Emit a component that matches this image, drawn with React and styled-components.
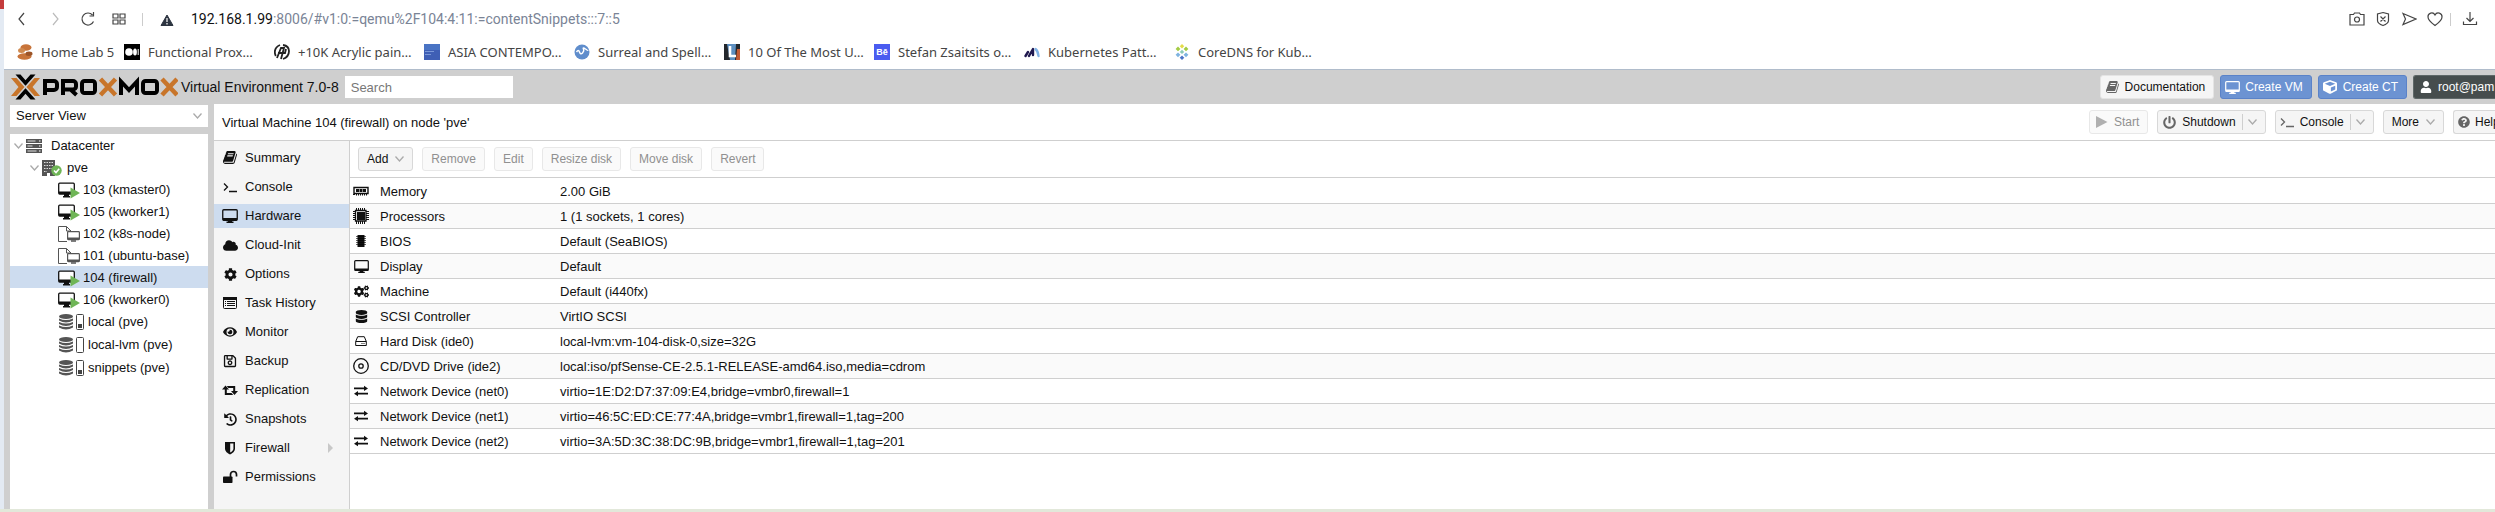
import React from 'react';
import styled, { createGlobalStyle, css } from 'styled-components';
import { FaCloud, FaCog, FaCogs, FaEye, FaHistory, FaDatabase, FaUser, FaCube, FaPowerOff, FaQuestionCircle, FaRegSave } from 'react-icons/fa';

const Global = createGlobalStyle`
  *, *::before, *::after { box-sizing: border-box; }
  html, body, #root { height: 100%; }
  body { margin: 0; background: #fff; font: 13px/20px "Liberation Sans", Arial, sans-serif; color: #111; overflow: hidden; }
  button, input, select { font: inherit; color: inherit; }
  ul { list-style: none; margin: 0; padding: 0; }
  a { color: inherit; text-decoration: none; }
  svg { display: block; flex: none; }
`;

const Window = styled.div`
  display: grid;
  grid-template-columns: 4px minmax(0, 1fr);
  grid-template-rows: minmax(0, 1fr) 3px;
  height: 100vh;
`;
const Edge = styled.div`
  background: linear-gradient(#c43c3c 9px, #e3eaf3 9px);
`;
const Browser = styled.div`
  display: flex;
  flex-direction: column;
  min-width: 0;
  min-height: 0;
`;
const BottomEdge = styled.div`
  grid-column: 1 / -1;
  background: #e2e8da;
`;

/* browser chrome */
const AddressRow = styled.div`
  display: flex;
  align-items: center;
  height: 38px;
  padding: 0 8px 0 10px;
  color: #444;
`;
const IconButton = styled.button`
  display: flex;
  align-items: center;
  justify-content: center;
  flex: none;
  width: ${p => p.$w || 26}px;
  height: 24px;
  padding: 0;
  border: 0;
  background: none;
  color: ${p => p.$faint ? '#bbb' : '#444'};
`;
const Divider = styled.span`
  width: 1px;
  height: 13px;
  margin: 0 ${p => p.$gap}px;
  background: #ccc;
`;
const Address = styled.div`
  flex: 1;
  font: 14px/20px Roboto, sans-serif;
  color: #7a8496;
  white-space: nowrap;
  b { font-weight: 400; color: #111; }
`;
const Bookmarks = styled.nav`
  display: flex;
  height: 32px;
  padding-left: 13px;
  padding-bottom: 3px;
  border-bottom: 1px solid #b0bccb;
  align-items: center;
  font: 13px/20px "Noto Sans", sans-serif;
  color: #444;
`;
const Bookmark = styled.a`
  display: flex;
  align-items: center;
  gap: 8px;
  flex: none;
  width: ${p => p.$short ? 107 : 150}px;
  white-space: nowrap;
`;

/* header */
const Header = styled.header`
  display: flex;
  align-items: center;
  gap: 6px;
  height: 34px;
  padding-left: 4px;
  background: #cfcfcf;
`;
const Brand = styled.div`
  display: flex;
  align-items: center;
  gap: 3px;
  font-size: 14px;
  white-space: nowrap;
`;
const Search = styled.input`
  width: 168px;
  height: 22px;
  padding: 0 6px;
  border: 0;
  border-radius: 0;
  background: #fff;
  &::placeholder { color: #777; opacity: 1; }
`;
const Spacer = styled.div`flex: 1;`;

const tones = {
  plain: css`background: #f5f5f5; border-color: #d8d8d8; color: #111;`,
  light: css`background: #f5f5f5; border-color: #e4e4e4; color: #111;`,
  blue: css`background: #6c93d2; border-color: #5a82c8; color: #fff;`,
  dark: css`background: #464d4d; border-color: #5f6868; color: #fff;`,
};
const ButtonIcon = styled.span`
  display: flex;
  justify-content: center;
  width: 15px;
  margin-right: 5px;
  color: #666;
`;
const ButtonBox = styled.button`
  display: inline-flex;
  align-items: center;
  flex: none;
  height: 24px;
  padding: 0 8px 0 ${p => p.$icon ? 4 : 8}px;
  border: 1px solid;
  border-radius: 3px;
  font-size: 12px;
  line-height: 20px;
  white-space: nowrap;
  ${p => tones[p.$tone || 'plain']}
  ${p => (p.$tone === 'blue' || p.$tone === 'dark') && css`${ButtonIcon} { color: #fff; }`}
  &:disabled { background: #fafafa; border-color: #e8e8e8; color: #909090; }
  &:disabled ${ButtonIcon} { color: #b0b0b0; }
  ${p => p.$clip && css`
    width: ${p.$clip}px;
    padding-right: 0;
    border-right: 0;
    border-radius: 3px 0 0 3px;
    overflow: hidden;
  `}
`;
const Split = styled.span`
  display: flex;
  align-items: center;
  height: 16px;
  margin-left: ${p => p.$line ? 6 : 2}px;
  padding-left: 5px;
  border-left: ${p => p.$line ? '1px solid #cfcfcf' : '0'};
`;

/* body */
const Body = styled.div`
  display: flex;
  flex: 1;
  min-height: 0;
  background: #cfcfcf;
`;
const Sidebar = styled.aside`
  display: flex;
  flex-direction: column;
  flex: none;
  width: 198px;
  margin: 1px 6px 0 6px;
  gap: 7px;
`;
const SelectBox = styled.label`
  display: grid;
  align-items: center;
  background: #fff;
  > * { grid-area: 1 / 1; }
  svg { justify-self: end; margin-right: 6px; pointer-events: none; }
`;
const Select = styled.select`
  appearance: none;
  width: 100%;
  height: 22px;
  padding: 0 6px;
  border: 0;
  background: none;
`;
const Tree = styled.ul`
  flex: 1;
  background: #fff;
`;
const TreeItem = styled.li`
  display: flex;
  align-items: center;
  height: ${p => p.$tall ? 23 : 22}px;
  padding-top: 1px;
  padding-left: ${p => p.$indent}px;
  gap: ${p => p.$gap}px;
  background: ${p => p.$on ? '#cddcef' : 'none'};
  white-space: nowrap;
`;
const Twisty = styled.span`
  width: 12px;
  flex: none;
`;
const LabelRow = styled.span`
  display: flex;
  align-items: center;
  gap: ${p => p.$gap}px;
`;
const Main = styled.main`
  display: flex;
  flex-direction: column;
  flex: 1;
  min-width: 0;
  background: #fff;
`;
const TitleBar = styled.div`
  display: flex;
  align-items: center;
  gap: 9px;
  height: 37px;
  padding-left: 8px;
  border-bottom: 1px solid #cfcfcf;
`;
const Title = styled.h1`
  flex: 1;
  margin: 0;
  padding-top: 2px;
  font-size: 13px;
  font-weight: 400;
`;
const Columns = styled.div`
  display: flex;
  flex: 1;
  min-height: 0;
`;
const Menu = styled.ul`
  display: flex;
  flex-direction: column;
  gap: 5px;
  flex: none;
  width: 136px;
  padding-top: 5px;
  border-right: 1px solid #cfcfcf;
  background: #f5f5f5;
`;
const MenuLink = styled.a`
  display: flex;
  align-items: center;
  height: 24px;
  padding-left: 8px;
  gap: 7px;
  background: ${p => p.$on ? '#cddcef' : 'none'};
`;
const IconCell = styled.span`
  display: flex;
  justify-content: center;
  flex: none;
  width: 16px;
`;
const Caret = styled.span`
  margin-left: auto;
  margin-right: 16px;
  border: 5px solid transparent;
  border-left-color: #c8c8c8;
  border-right: 0;
`;
const Content = styled.section`
  flex: 1;
  min-width: 0;
`;
const Toolbar = styled.div`
  display: flex;
  align-items: center;
  gap: 9px;
  height: 37px;
  padding-left: 8px;
  border-bottom: 1px solid #cfcfcf;
`;
const Table = styled.table`
  width: 100%;
  margin-top: 1px;
  border-collapse: separate;
  border-spacing: 0;
  table-layout: fixed;
  tr:nth-child(even) { background: #fafafa; }
  td, th { height: 25px; padding: 2px 0 0; border-bottom: 1px solid #cfcfcf; font-weight: 400; text-align: left; white-space: nowrap; }
  td:first-child { width: 30px; padding: 0 0 0 3px; }
  th { width: 180px; }
`;

/* icons */
const Chevron = () => (
  <svg width="9" height="6" viewBox="0 0 9 6" fill="none" stroke="#aaa" strokeWidth="1.3"><path d="M.5 .5 4.5 5 8.500 .5" /></svg>
);
const Play = () => (
  <svg width="13" height="14" viewBox="0 0 13 14"><path d="M1 1l11.500 6L1 13z" fill="currentColor" /></svg>
);
const Book = ({ s = 14 }) => (
  <svg width={s} height={s} viewBox="0 0 1664 1664" fill="currentColor"><path d="M1639 350q40 57 18 129l-275 906q-19 64-76.500 107.500t-122.500 43.500h-923q-77 0-148.500-53.500t-99.500-131.500q-24-67-2-127 0-4 3-27t4-37q1-8-3-21.500t-3-19.500q2-11 8-21t16.500-23.500 16.500-23.500q23-38 45-91.500t30-91.500q3-10 .5-30t-.5-28q3-11 17-28t17-23q21-36 42-92t25-90q1-9-2.500-32t.5-28q4-13 22-30.500t22-22.500q19-26 42.500-84.500t27.500-96.500q1-8-3-25.500t-2-26.500q2-8 9-18t18-23 17-21q8-12 16.500-30.500t15-35 16-36 19.500-32 26.500-23.500 36-11.500 47.500 5.500l-1 3q38-9 51-9h761q74 0 114 56t18 130l-274 906q-36 119-71.500 153.500t-128.500 34.500h-869q-27 0-38 15-11 16-1 43 24 70 144 70h923q29 0 56-15.500t35-41.500l300-987q7-22 5-57 38 15 59 43zm-1064 2q-4 13 2 22.500t20 9.500h608q13 0 25.500-9.500t16.500-22.500l21-64q4-13-2-22.500t-20-9.500h-608q-13 0-25.500 9.500t-16.500 22.500zm-83 256q-4 13 2 22.500t20 9.500h608q13 0 25.500-9.500t16.500-22.500l21-64q4-13-2-22.500t-20-9.500h-608q-13 0-25.500 9.500t-16.500 22.500z" /></svg>
);
const Desktop = ({ s = 16 }) => (
  <svg width={s} height={s} viewBox="0 0 16 16" fill="none"><rect x=".75" y="1.750" width="14.500" height="10.500" rx="1" stroke="currentColor" strokeWidth="1.300" /><path d="M1 10h14v2.500H1zM6 12h4v1.500h1.500V15h-7v-1.500H6z" fill="currentColor" /></svg>
);
const Terminal = () => (
  <svg width="14" height="14" viewBox="0 0 14 14" fill="none" stroke="currentColor" strokeWidth="1.300"><path d="M1 3.500 4.500 7 1 10.500M6 11.500h8" /></svg>
);
const ListAlt = () => (
  <svg width="14" height="14" viewBox="0 0 14 14"><rect x=".5" y="1.500" width="13" height="11" rx="1" fill="none" stroke="currentColor" /><path d="M0 1h14v3H0zM2 5h1v1H2zM4 5h8v1H4zM2 7h1v1H2zM4 7h8v1H4zM2 9h1v1H2zM4 9h8v1H4z" fill="currentColor" /></svg>
);
const Retweet = () => (
  <svg width="16" height="14" viewBox="0 0 16 14" fill="currentColor"><path d="M3.500 2.500 7 6.500H4.800V10h4.700l1.700 2H2.800V6.500H0zM4.700 3h8.500v5H16l-3.500 4L9 8h2.200V5H6.400z" /></svg>
);
const Shield = () => (
  <svg width="14" height="14" viewBox="0 0 14 14"><path d="M2 1h10v6.500c0 3-2.500 4.700-5 6-2.500-1.300-5-3-5-6z" fill="currentColor" /><path d="M7.200 2.500h3.200v5c0 1.800-1.300 3-3.200 4.100z" fill="#f5f5f5" /></svg>
);
const Unlock = () => (
  <svg width="15" height="14" viewBox="0 0 15 14"><rect x="0" y="6.500" width="9.500" height="6.500" rx=".8" fill="currentColor" /><path d="M7.500 7V4.500a3 3 0 0 1 6 0v2" fill="none" stroke="currentColor" strokeWidth="1.700" /></svg>
);
const Memory = () => (
  <svg width="16" height="16" viewBox="0 0 16 16"><path d="M1 4.500h14v6H1z" fill="none" stroke="currentColor" strokeWidth="1.400" /><path d="M3 6h3v3H3zM6.500 6h3v3h-3zM10 6h3v3h-3zM0 11h2v1H0zM3 11h1v1.500H3zM5 11h1v1.500H5zM7 11h1v1.500H7zM9 11h1v1.500H9zM11 11h1v1.500h-1zM13 11h1v1.500h-1z" fill="currentColor" /></svg>
);
const Cpu = () => (
  <svg width="16" height="16" viewBox="0 0 16 16" fill="none" stroke="currentColor"><path d="M3.500 0v16M5.500 0v16M7.500 0v16M9.500 0v16M11.500 0v16M0 3.500h16M0 5.500h16M0 7.500h16M0 9.500h16M0 11.500h16" /><path d="M2.500 2.500h10.500v10.500H2.500z" fill="#fafafa" strokeWidth="1.300" /><path d="M4 4h8v8H4z" fill="currentColor" stroke="none" /></svg>
);
const Chip = () => (
  <svg width="12" height="14" viewBox="0 0 12 14"><path d="M2.500 1h7v12h-7z" fill="currentColor" /><path d="M1 2.500h10M1 4.500h10M1 6.500h10M1 8.500h10M1 10.500h10" stroke="#000" strokeOpacity=".6" /></svg>
);
const Hdd = () => (
  <svg width="12" height="12" viewBox="0 0 12 12" fill="none" stroke="currentColor"><path d="M.7 6.500 2.700 1.700h6.600l2 4.800v4H.7zM.7 6.500h10.600" /><path d="M6.500 8.500h1M8.500 8.500h1" /></svg>
);
const Disc = () => (
  <svg width="16" height="16" viewBox="0 0 16 16" fill="none" stroke="currentColor" strokeWidth="1.300"><circle cx="8" cy="8" r="7.300" /><circle cx="8" cy="8" r="2.200" /></svg>
);
const Exchange = () => (
  <svg width="14" height="14" viewBox="0 0 14 14" fill="currentColor"><path d="M0 3.500h10V1.800L14 4.500 10 7V5.300H0zM14 8.800H4V7L0 9.700l4 2.600v-1.700h10z" /></svg>
);
const ServerIcon = () => (
  <svg width="16" height="14" viewBox="0 0 16 14"><path d="M0 0h16v4H0zM0 5h16v4H0zM0 10h16v4H0z" fill="#555" /><path d="M1.500 2h8M1.500 7h5M1.500 12h9" stroke="#ddd" strokeWidth="1.200" /><path d="M13 2h1.500M13 7h1.500M13 12h1.500" stroke="#fff" /></svg>
);
const NodeIcon = () => (
  <svg width="20" height="18" viewBox="0 0 20 18"><path d="M0 1h13v16H0z" fill="#555" /><path d="M2 3.500h9M2 6.500h9M2 9.500h9M2 12.500h3" stroke="#ddd" strokeDasharray="1.500 1" /><path d="M5 14h3v3H5z" fill="#fff" /><circle cx="14.500" cy="11.500" r="5.200" fill="#6fb556" /><path d="m12 11.500 2 2 3.200-3.700" fill="none" stroke="#fff" strokeWidth="1.600" /></svg>
);
const RunningVm = () => (
  <svg width="22" height="18" viewBox="0 0 22 18"><rect x=".7" y="2.200" width="15.600" height="10.800" rx="1" fill="#fff" stroke="#111" strokeWidth="1.300" /><path d="M1 10.500h15V13H1zM6 13h5v2h1v1.500H5V15h1z" fill="#111" /><path d="M12.500 6.500 22 12l-9.500 5.500z" fill="#6fb556" /></svg>
);
const TemplateVm = () => (
  <svg width="22" height="18" viewBox="0 0 22 18" fill="none" stroke="#555"><path d="M9 16.500H.5v-15h8L13 6M8.500 1.500V6H13" /><rect x="9.600" y="6.600" width="11.800" height="8" rx=".8" fill="#fff" strokeWidth="1.200" /><path d="M9.500 13.500h12" strokeWidth="2" /><path d="M13 16h5" strokeWidth="1.500" /></svg>
);
const Storage = ({ used }) => (
  <svg width="26" height="18" viewBox="0 0 26 18"><g fill="#555"><ellipse cx="8" cy="3.500" rx="7" ry="2.600" /><path d="M1 5.500q7 3 14 0v2q-7 4-14 0zM1 9q7 3 14 0v2q-7 4-14 0zM1 12.500q7 3 14 0v2q-7 4-14 0z" /></g><rect x="18.500" y="1.500" width="7" height="15" rx="1" fill="#fff" stroke="#444" />{used && <path d="M20 11h4v4h-4z" fill="#444" />}</svg>
);
const Logo = () => (
  <svg width="170" height="28" viewBox="0 0 170 28" fill="none">
    <path d="M3 5h5.500l8 9-8 9H3l7.500-9zM32 5h-5.500l-8 9 8 9H32l-7.500-9z" fill="#c8752a" />
    <path d="M7.500 1.500h5l5 5.800 5-5.800h5L17.500 12.800zM7.500 26.500h5l5-5.800 5 5.800h5L17.500 15.200z" fill="#000" />
    <g stroke="#000" strokeWidth="4">
      <path d="M37 22V8h9a3 3 0 0 1 3 3v3a3 3 0 0 1-3 3h-9" />
      <path d="M55 22V8h10a3 3 0 0 1 3 3v2.500a3 3 0 0 1-3 3H55M62 16l6.500 6" />
      <rect x="74" y="8" width="13" height="12" rx="2.500" />
      <path d="M113 22V8.500l8 8.500 8-8.500V22" />
      <rect x="135" y="8" width="14" height="12" rx="2.500" />
    </g>
    <g stroke="#c8752a" strokeWidth="4.500"><path d="m92.500 6 15 16M107.500 6l-15 16M154 6l15 16M169 6l-15 16" /></g>
  </svg>
);
const Line = ({ children }) => (
  <svg width="16" height="16" viewBox="0 0 16 16" fill="none" stroke="currentColor" strokeWidth="1.200">{children}</svg>
);

const Button = ({ icon, tone, clip, disabled, children }) => (
  <ButtonBox type="button" disabled={disabled} $icon={!!icon} $tone={tone} $clip={clip}>
    {icon && <ButtonIcon>{icon}</ButtonIcon>}
    {children}
  </ButtonBox>
);

const bookmarks = [
  ['Home Lab 5', <><ellipse cx="9" cy="3.500" rx="5.500" ry="3.200" fill="#c8743a" /><ellipse cx="4.500" cy="6.500" rx="3.500" ry="2.500" fill="#d08a50" /><ellipse cx="7.500" cy="12.500" rx="7" ry="3.300" fill="#c8743a" /><ellipse cx="12" cy="9.800" rx="3.500" ry="2.200" fill="#9c5428" /></>],
  ['Functional Prox…', <><rect width="16" height="16" fill="#000" /><circle cx="5" cy="8" r="3.800" fill="#fff" /><ellipse cx="11" cy="8" rx="1.900" ry="3.600" fill="#fff" /><path d="M14.200 5v6" stroke="#fff" /></>],
  ['+10K Acrylic pain…', <><path d="M6 1Q1 3 .8 8q0 2 1 4M9 1q6 1 6 6 0 6-6 8" stroke="#222" strokeWidth="1.800" fill="none" /><path d="M3 14 7 4h3L7 15M4 9h7l1-4" stroke="#222" strokeWidth="1.800" fill="none" /></>],
  ['ASIA CONTEMPO…', <><rect width="16" height="16" fill="#3f5fb5" /><path d="M0 0h16v6H0z" fill="#4a74c4" /><path d="M1 7.500h9M1 10.500h6" stroke="#7b98d8" /></>],
  ['Surreal and Spell…', <><circle cx="8" cy="8" r="7.500" fill="#5f8dcc" /><path d="M2.500 8q2-3 3 0t3 1 1-4 2 0 2 1" stroke="#fff" strokeWidth="1.500" fill="none" /></>],
  ['10 Of The Most U…', <><rect width="16" height="16" fill="#23272c" /><path d="M3 0h9l-1 16H6z" fill="#5d8fc0" /><path d="M13 5h3v11h-4z" fill="#c35a34" /><path d="M6 2v10h6" stroke="#fff" strokeWidth="2.600" fill="none" /></>],
  ['Stefan Zsaitsits o…', <><rect width="16" height="16" fill="#4a5cf0" /><text x="8" y="11" textAnchor="middle" fill="#fff" fontFamily="Liberation Sans, sans-serif" fontSize="9" fontWeight="700">Bē</text></>],
  ['Kubernetes Patt…', <><path d="m1.500 12 2.500-4M5 12l4-7v6" stroke="#20184f" strokeWidth="2.400" strokeLinecap="round" strokeLinejoin="round" fill="none" /><path d="M11.500 5Q14 7 14.500 12" stroke="#82b3e6" strokeWidth="2.400" strokeLinecap="round" fill="none" /></>],
  ['CoreDNS for Kub…', <><path d="m8 0 2.200 2.200L8 4.400 5.800 2.200z" fill="#e4dc4a" /><path d="m4 2.500 2.400 2.400L4 7.300 1.600 4.900zM12 2.500l2.400 2.400L12 7.300 9.600 4.900z" fill="#a4cc44" /><path d="m8 5.700 2.200 2.200L8 10.100 5.800 7.900z" fill="#8ccab8" /><path d="m4 8.500 2.400 2.300L4 13.200l-2.400-2.400zM12 8.500l2.400 2.300-2.400 2.400-2.400-2.400z" fill="#7fb4e0" /><path d="m8 11.400 2.300 2.300L8 16l-2.300-2.300z" fill="#4a74c8" /></>],
];

const vms = [
  ['103 (kmaster0)', true], ['105 (kworker1)', true], ['102 (k8s-node)', false],
  ['101 (ubuntu-base)', false], ['104 (firewall)', true], ['106 (kworker0)', true],
];
const stores = [['local (pve)', true], ['local-lvm (pve)', false], ['snippets (pve)', true]];

const menu = [
  ['Summary', <Book />], ['Console', <Terminal />], ['Hardware', <Desktop />],
  ['Cloud-Init', <FaCloud size={15} />], ['Options', <FaCog size={13} />], ['Task History', <ListAlt />],
  ['Monitor', <FaEye size={14} />], ['Backup', <FaRegSave size={14} />], ['Replication', <Retweet />],
  ['Snapshots', <FaHistory size={13} />], ['Firewall', <Shield />], ['Permissions', <Unlock />],
];

const hardware = [
  [<Memory />, 'Memory', '2.00 GiB'],
  [<Cpu />, 'Processors', '1 (1 sockets, 1 cores)'],
  [<Chip />, 'BIOS', 'Default (SeaBIOS)'],
  [<Desktop s={15} />, 'Display', 'Default'],
  [<FaCogs size={15} />, 'Machine', 'Default (i440fx)'],
  [<FaDatabase size={13} />, 'SCSI Controller', 'VirtIO SCSI'],
  [<Hdd />, 'Hard Disk (ide0)', 'local-lvm:vm-104-disk-0,size=32G'],
  [<Disc />, 'CD/DVD Drive (ide2)', 'local:iso/pfSense-CE-2.5.1-RELEASE-amd64.iso,media=cdrom'],
  [<Exchange />, 'Network Device (net0)', 'virtio=1E:D2:D7:37:09:E4,bridge=vmbr0,firewall=1'],
  [<Exchange />, 'Network Device (net1)', 'virtio=46:5C:ED:CE:77:4A,bridge=vmbr1,firewall=1,tag=200'],
  [<Exchange />, 'Network Device (net2)', 'virtio=3A:5D:3C:38:DC:9B,bridge=vmbr1,firewall=1,tag=201'],
];

export default function App() {
  return (
    <Window>
      <Global />
      <Edge />
      <Browser>
        <AddressRow>
          <IconButton $w={16} aria-label="Back"><Line><path d="M10 2 5 8l5 6" /></Line></IconButton>
          <IconButton $w={50} $faint aria-label="Forward"><Line><path d="m6 2 5 6-5 6" /></Line></IconButton>
          <IconButton $w={16} aria-label="Reload"><Line><path d="M13.500 10.500A6 6 0 1 1 12.500 4M13.500 1v4h-4" /></Line></IconButton>
          <IconButton $w={46} aria-label="Speed dial"><Line><path d="M2 3h5v4H2zM9 3h5v4H9zM2 9h5v4H2zM9 9h5v4H9z" /></Line></IconButton>
          <Divider $gap={0} />
          <IconButton $w={48} aria-label="Not secure"><svg width="16" height="16" viewBox="0 0 16 16"><path d="M8 4 14 14.500H2z" fill="#2c3440" stroke="#2c3440" strokeLinejoin="round" /><path d="M8 7v4M8 12v1.500" stroke="#fff" strokeWidth="1.200" /></svg></IconButton>
          <Address><b>192.168.1.99</b>:8006/#v1:0:=qemu%2F104:4:11:=contentSnippets:::7::5</Address>
          <IconButton aria-label="Snapshot"><Line><path d="M1 3.500h3.500l1-1.500h5l1 1.500H15v10.500H1z" /><circle cx="8" cy="8.500" r="2.500" /></Line></IconButton>
          <IconButton aria-label="Blocker"><Line><path d="M8 1.500 13.500 3v6.500q0 3-5.500 5-5.500-2-5.500-5V3zM5.500 5.500l5 5M10.500 5.500l-5 5" /></Line></IconButton>
          <IconButton aria-label="Send"><Line><path d="M2 2.500 15 8 2 13.500 4.500 8z" /></Line></IconButton>
          <IconButton aria-label="Favourite"><Line><path d="M8 14.500Q1 9.500 1 6a3.700 3.700 0 0 1 7-2 3.700 3.700 0 0 1 7 2q0 3.500-7 8.500z" /></Line></IconButton>
          <Divider $gap={2} />
          <IconButton $w={34} aria-label="Downloads"><Line><path d="M8 1v9M4.500 7 8 10.500 11.500 7M1.500 10.500v3h13v-3" /></Line></IconButton>
        </AddressRow>
        <Bookmarks aria-label="Bookmarks">
          {bookmarks.map(([t, art], i) => (
            <Bookmark key={t} href="#" $short={i === 0}><svg width="16" height="16" viewBox="0 0 16 16">{art}</svg>{t}</Bookmark>
          ))}
        </Bookmarks>
        <Header>
          <Brand><Logo />Virtual Environment 7.0-8</Brand>
          <Search type="search" placeholder="Search" aria-label="Search" />
          <Spacer />
          <Button tone="light" icon={<Book s={13} />}>Documentation</Button>
          <Button tone="blue" icon={<Desktop s={15} />}>Create VM</Button>
          <Button tone="blue" icon={<FaCube size={14} />}>Create CT</Button>
          <Button tone="dark" clip={82} icon={<FaUser size={12} />}>root@pam</Button>
        </Header>
        <Body>
          <Sidebar>
            <SelectBox>
              <Select aria-label="View" defaultValue="server"><option value="server">Server View</option></Select>
              <Chevron />
            </SelectBox>
            <Tree>
              <TreeItem $indent={4} $gap={0}><Twisty><Chevron /></Twisty><LabelRow $gap={9}><ServerIcon />Datacenter</LabelRow></TreeItem>
              <TreeItem $indent={20} $gap={0}><Twisty><Chevron /></Twisty><LabelRow $gap={5}><NodeIcon />pve</LabelRow></TreeItem>
              {vms.map(([t, run]) => (
                <TreeItem key={t} $indent={48} $gap={3} $on={t === '104 (firewall)'}>{run ? <RunningVm /> : <TemplateVm />}{t}</TreeItem>
              ))}
              {stores.map(([t, used]) => (
                <TreeItem key={t} $tall $indent={48} $gap={4}><Storage used={used} />{t}</TreeItem>
              ))}
            </Tree>
          </Sidebar>
          <Main>
            <TitleBar>
              <Title>Virtual Machine 104 (firewall) on node 'pve'</Title>
              <Button disabled icon={<Play />}>Start</Button>
              <Button icon={<FaPowerOff size={13} />}>Shutdown<Split $line><Chevron /></Split></Button>
              <Button icon={<Terminal />}>Console<Split $line><Chevron /></Split></Button>
              <Button>More<Split><Chevron /></Split></Button>
              <Button clip={42} icon={<FaQuestionCircle size={12} />}>Help</Button>
            </TitleBar>
            <Columns>
              <Menu>
                {menu.map(([t, icon]) => (
                  <li key={t}>
                    <MenuLink href="#" $on={t === 'Hardware'}><IconCell>{icon}</IconCell>{t}{t === 'Firewall' && <Caret />}</MenuLink>
                  </li>
                ))}
              </Menu>
              <Content>
                <Toolbar>
                  <Button>Add<Split><Chevron /></Split></Button>
                  {['Remove', 'Edit', 'Resize disk', 'Move disk', 'Revert'].map(t => <Button key={t} disabled>{t}</Button>)}
                </Toolbar>
                <Table>
                  <tbody>
                    {hardware.map(([icon, name, value]) => (
                      <tr key={name}><td><IconCell>{icon}</IconCell></td><th scope="row">{name}</th><td>{value}</td></tr>
                    ))}
                  </tbody>
                </Table>
              </Content>
            </Columns>
          </Main>
        </Body>
      </Browser>
      <BottomEdge />
    </Window>
  );
}
